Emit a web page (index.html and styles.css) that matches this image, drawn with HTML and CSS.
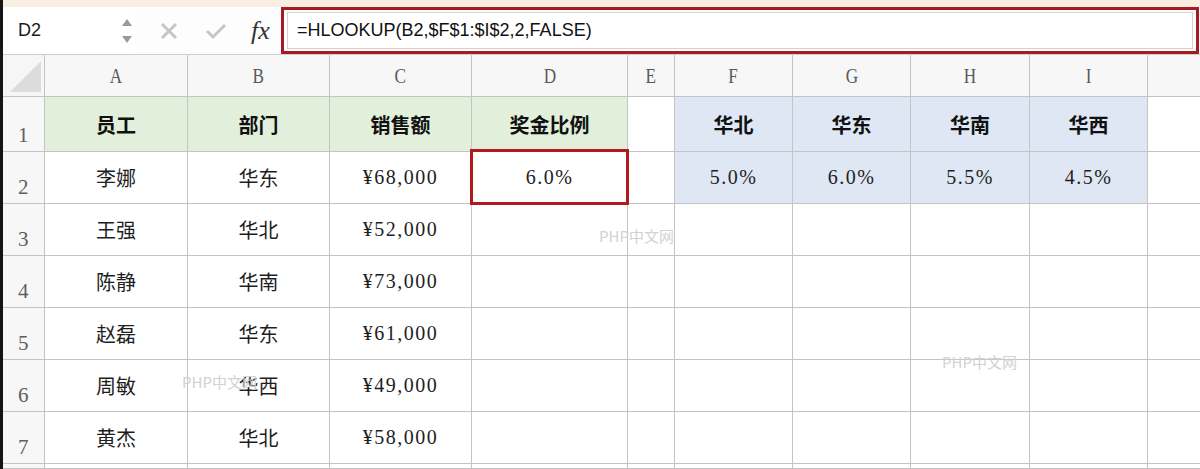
FILE: index.html
```html
<!DOCTYPE html>
<html lang="zh-CN">
<head>
  <meta charset="UTF-8" />
  <title>HLOOKUP 奖金比例</title>
  <link rel="stylesheet" href="styles.css">
</head>
<body>

  <div class="title-strip"></div>

  <div class="toolbar">
    <div class="name-box">
      <span class="cell-ref">D2</span>
      <svg class="spin" width="12" height="28" viewBox="0 0 12 28">
        <path d="M1 9 L6 2 L11 9 Z" fill="#9a9a9a" />
        <path d="M1 19 L6 26 L11 19 Z" fill="#9a9a9a" />
      </svg>
    </div>
    <div class="tools">
      <svg width="18" height="18" viewBox="0 0 18 18">
        <path d="M2 2 L16 16 M16 2 L2 16" stroke="#c6c6c6" stroke-width="3" />
      </svg>
      <svg width="22" height="18" viewBox="0 0 22 18">
        <path d="M2 9 L8 15 L20 3" stroke="#c6c6c6" stroke-width="3" fill="none" />
      </svg>
      <span class="fx">fx</span>
    </div>
    <div class="formula-box">
      <div class="formula">=HLOOKUP(B2,$F$1:$I$2,2,FALSE)</div>
    </div>
  </div>

  <div class="sheet">
    <!-- column headers -->
    <div class="corner">
      <svg width="34" height="34" viewBox="0 0 34 34">
        <path d="M2 33 L33 33 L33 2 Z" fill="#dcdcdc" />
      </svg>
    </div>
    <div class="col-head"><span>A</span></div>
    <div class="col-head"><span>B</span></div>
    <div class="col-head"><span>C</span></div>
    <div class="col-head"><span>D</span></div>
    <div class="col-head"><span>E</span></div>
    <div class="col-head"><span>F</span></div>
    <div class="col-head"><span>G</span></div>
    <div class="col-head"><span>H</span></div>
    <div class="col-head"><span>I</span></div>
    <div class="col-head"><span>J</span></div>

    <!-- row 1 -->
    <div class="row-head">1</div>
    <div class="cell head green">员工</div>
    <div class="cell head green">部门</div>
    <div class="cell head green">销售额</div>
    <div class="cell head green">奖金比例</div>
    <div class="cell"></div>
    <div class="cell head blue">华北</div>
    <div class="cell head blue">华东</div>
    <div class="cell head blue">华南</div>
    <div class="cell head blue">华西</div>
    <div class="cell"></div>

    <!-- row 2 -->
    <div class="row-head">2</div>
    <div class="cell">李娜</div>
    <div class="cell">华东</div>
    <div class="cell num">¥68,000</div>
    <div class="cell num selected">6.0%</div>
    <div class="cell"></div>
    <div class="cell num blue">5.0%</div>
    <div class="cell num blue">6.0%</div>
    <div class="cell num blue">5.5%</div>
    <div class="cell num blue">4.5%</div>
    <div class="cell"></div>

    <!-- row 3 -->
    <div class="row-head">3</div>
    <div class="cell">王强</div>
    <div class="cell">华北</div>
    <div class="cell num">¥52,000</div>
    <div class="cell"></div><div class="cell"></div><div class="cell"></div>
    <div class="cell"></div><div class="cell"></div><div class="cell"></div><div class="cell"></div>

    <!-- row 4 -->
    <div class="row-head">4</div>
    <div class="cell">陈静</div>
    <div class="cell">华南</div>
    <div class="cell num">¥73,000</div>
    <div class="cell"></div><div class="cell"></div><div class="cell"></div>
    <div class="cell"></div><div class="cell"></div><div class="cell"></div><div class="cell"></div>

    <!-- row 5 -->
    <div class="row-head">5</div>
    <div class="cell">赵磊</div>
    <div class="cell">华东</div>
    <div class="cell num">¥61,000</div>
    <div class="cell"></div><div class="cell"></div><div class="cell"></div>
    <div class="cell"></div><div class="cell"></div><div class="cell"></div><div class="cell"></div>

    <!-- row 6 -->
    <div class="row-head">6</div>
    <div class="cell">周敏</div>
    <div class="cell">华西</div>
    <div class="cell num">¥49,000</div>
    <div class="cell"></div><div class="cell"></div><div class="cell"></div>
    <div class="cell"></div><div class="cell"></div><div class="cell"></div><div class="cell"></div>

    <!-- row 7 -->
    <div class="row-head">7</div>
    <div class="cell">黄杰</div>
    <div class="cell">华北</div>
    <div class="cell num">¥58,000</div>
    <div class="cell"></div><div class="cell"></div><div class="cell"></div>
    <div class="cell"></div><div class="cell"></div><div class="cell"></div><div class="cell"></div>

    <!-- row 8, only its top edge shows -->
    <div class="row-head"></div>
    <div class="cell"></div><div class="cell"></div><div class="cell"></div><div class="cell"></div>
    <div class="cell"></div><div class="cell"></div><div class="cell"></div><div class="cell"></div>
    <div class="cell"></div><div class="cell"></div>
  </div>

  <div class="watermark wm-1">PHP中文网</div>
  <div class="watermark wm-2">PHP中文网</div>
  <div class="watermark wm-3">PHP中文网</div>

</body>
</html>
```

FILE: styles.css
```css
html, body {
  margin: 0;
  padding: 0;
  overflow: hidden;
}

body {
  position: relative;
  width: 1200px;
  height: 469px;
  background-color: #ffffff;
  border-left: 3px solid #151515;
  box-sizing: border-box;
  font-family: "Noto Sans CJK SC", sans-serif;
}

.title-strip {
  height: 7px;
  background-color: #f8efe0;
}

.toolbar {
  display: flex;
  height: 48px;
  background-color: #fdfdfd;
  border-bottom: 1px solid #cfcfcf;
  box-sizing: border-box;
}

.name-box {
  display: flex;
  align-items: center;
  justify-content: space-between;
  width: 132px;
  padding: 0 2px 0 15px;
  box-sizing: border-box;
  background-color: #ffffff;
}

.cell-ref {
  font-family: "Liberation Sans", Arial, sans-serif;
  font-size: 18px;
  color: #1a1a1a;
}

.tools {
  display: flex;
  align-items: center;
  width: 146px;
  padding-left: 25px;
  gap: 27px;
  box-sizing: border-box;
}

.fx {
  font-family: "Liberation Serif", serif;
  font-style: italic;
  font-size: 26px;
  color: #333333;
  margin-left: -3px;
  letter-spacing: 0;
}

.formula-box {
  flex: 1;
  border: 3px solid #a51b22;
  padding: 2px 3px;
  margin-right: 1px;
}

.formula {
  height: 100%;
  box-sizing: border-box;
  border: 1px solid #d2d2d2;
  background-color: #ffffff;
  padding-left: 9px;
  display: flex;
  align-items: center;
  font-family: "Liberation Sans", Arial, sans-serif;
  font-size: 18px;
  color: #111111;
}

.sheet {
  display: grid;
  grid-template-columns: 42px 143px 142px 142px 156px 47px 118px 118px 119px 118px 118px;
  grid-template-rows: 42px 55px repeat(6, 52px) 5px;
  width: 1263px;
}

.corner,
.col-head,
.row-head,
.cell {
  border-right: 1px solid #c4c4c4;
  border-bottom: 1px solid #c4c4c4;
  box-sizing: border-box;
}

.corner {
  background-color: #f6f6f6;
  display: flex;
  align-items: flex-end;
  justify-content: flex-end;
  padding: 0 2px 3px 0;
}

.col-head {
  background-color: #f7f7f7;
  display: flex;
  align-items: center;
  justify-content: center;
  font-family: "Liberation Serif", serif;
  font-size: 22px;
  color: #595959;
}

.col-head span {
  display: inline-block;
  transform: scaleX(0.78);
}

.row-head {
  background-color: #f7f7f7;
  display: flex;
  align-items: flex-end;
  padding: 0 0 3px 15px;
  font-family: "Liberation Serif", serif;
  font-size: 21px;
  color: #5e5e5e;
}

.cell {
  display: flex;
  align-items: center;
  justify-content: center;
  font-size: 20px;
  color: #1e1e1e;
}

.cell.head {
  font-weight: 700;
  font-size: 20px;
  color: #111111;
}

.cell.num {
  font-family: "Liberation Serif", "Noto Sans CJK SC", serif;
  font-size: 20px;
  letter-spacing: 1.5px;
}

.green {
  background-color: #e2efda;
}

.blue {
  background-color: #dee7f3;
}

.selected {
  position: relative;
}

.selected::after {
  content: "";
  position: absolute;
  top: -3px;
  left: -2px;
  right: -2px;
  bottom: -2px;
  border: 3px solid #b01a1f;
}

.watermark {
  position: absolute;
  font-family: "Noto Sans CJK SC", sans-serif;
  font-size: 15px;
  color: #d2d2d2;
  pointer-events: none;
}

.wm-1 {
  left: 596px;
  top: 225px;
}

.wm-2 {
  left: 179px;
  top: 371px;
}

.wm-3 {
  left: 939px;
  top: 351px;
}
```
